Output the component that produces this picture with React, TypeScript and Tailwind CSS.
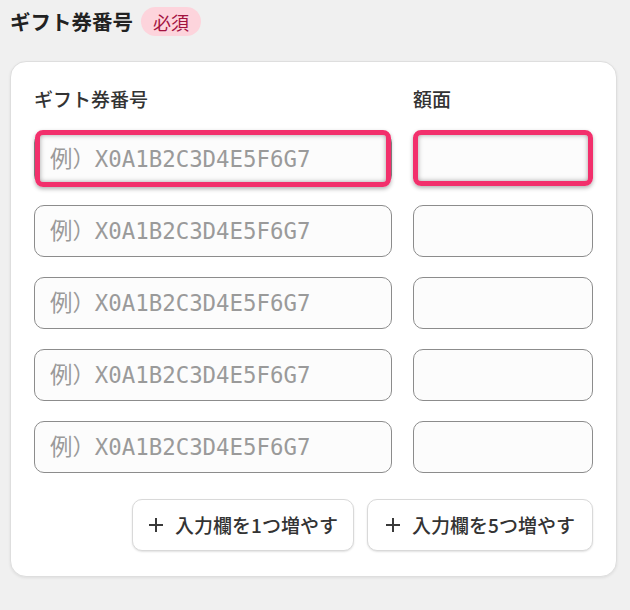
import React from "react";

const PH = "例）X0A1B2C3D4E5F6G7";

function Plus() {
  return (
    <svg width="16" height="16" viewBox="0 0 16 16" className="shrink-0">
      <path d="M8 1v14M1 8h14" stroke="#3a3a3a" strokeWidth="2" />
    </svg>
  );
}

function Row({ hl }: { hl?: boolean }) {
  return (
    <>
      <div className="relative h-[52px]">
        <input
          placeholder={PH}
          className="w-full h-full rounded-[10px] border border-[#8c8c8c] bg-[#fcfcfc] pl-[15px] text-[22.4px] text-[#333] placeholder:text-[#9a9a9a] outline-none"
          style={{ fontFamily: '"DejaVu Sans Mono", "Noto Sans CJK JP", monospace' }}
        />
        {hl && (
          <div className="pointer-events-none absolute left-[1px] right-[1px] -top-[3px] -bottom-[2px] rounded-[8px] border-[5px] border-[#f2306c] shadow-[0_2px_4px_rgba(0,0,0,0.3),inset_0_0_5px_rgba(0,0,0,0.35)]" />
        )}
      </div>
      <div className="relative h-[52px]">
        <input className="w-full h-full rounded-[10px] border border-[#8c8c8c] bg-[#fcfcfc] outline-none" />
        {hl && (
          <div className="pointer-events-none absolute left-0 right-0 -top-[3px] -bottom-[1px] rounded-[8px] border-[5px] border-[#f2306c] shadow-[0_2px_4px_rgba(0,0,0,0.3),inset_0_0_5px_rgba(0,0,0,0.35)]" />
        )}
      </div>
    </>
  );
}

export default function App() {
  return (
    <div
      className="w-[630px] h-[610px] bg-[#f0f0f0] px-[10px] pt-[7px]"
      style={{ fontFamily: '"Noto Sans CJK JP", "Noto Sans", sans-serif' }}
    >
      <div className="flex items-center h-[29px] gap-[8px]">
        <h1 className="text-[20.5px] font-bold text-[#222] leading-none">ギフト券番号</h1>
        <span className="h-[29px] px-[12px] rounded-full bg-[#fdd4dc] text-[#a3123f] text-[18px] flex items-center leading-none">
          必須
        </span>
      </div>
      <div className="mt-[25px] w-[607px] rounded-[16px] border border-[#dedede] bg-white shadow-[0_1px_3px_rgba(0,0,0,0.08)] px-[23px] pt-[25px] pb-[25px]">
        <div className="grid grid-cols-[358px_180px] gap-x-[21px] gap-y-[20px]">
          <div className="text-[19px] font-medium text-[#333] leading-[24px] h-[24px] mb-[2px]">ギフト券番号</div>
          <div className="text-[19px] font-medium text-[#333] leading-[24px] h-[24px] mb-[2px]">額面</div>
          <Row hl />
          <Row />
          <Row />
          <Row />
          <Row />
        </div>
        <div className="flex justify-end gap-[13px] mt-[26px]">
          <button className="h-[52px] w-[222px] rounded-[10px] border border-[#d9d9d9] bg-white shadow-[0_1px_2px_rgba(0,0,0,0.12)] flex items-center justify-center gap-[11px] text-[19px] font-medium text-[#333]">
            <Plus />
            入力欄を1つ増やす
          </button>
          <button className="h-[52px] w-[226px] rounded-[10px] border border-[#d9d9d9] bg-white shadow-[0_1px_2px_rgba(0,0,0,0.12)] flex items-center justify-center gap-[11px] text-[19px] font-medium text-[#333]">
            <Plus />
            入力欄を5つ増やす
          </button>
        </div>
      </div>
    </div>
  );
}
